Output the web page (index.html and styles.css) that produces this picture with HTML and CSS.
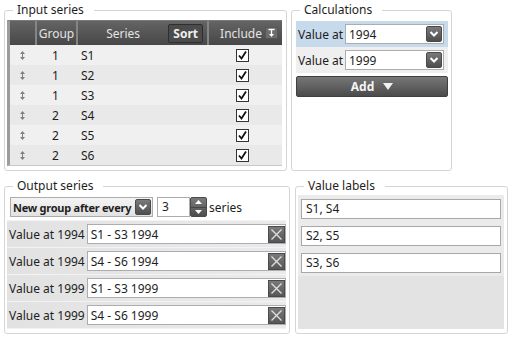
FILE: index.html
```html
<!DOCTYPE html>
<html lang="en">
<head>
<meta charset="UTF-8">
<title>Series grouping</title>
<link rel="stylesheet" href="styles.css">
</head>
<body>

<div class="top">
  <fieldset class="box input-box">
    <legend>Input series</legend>
    <div class="grid">
      <div class="grid-head">
        <div class="cell"></div>
        <div class="cell center">Group</div>
        <div class="cell series-head"><span>Series</span><span class="sort-btn">Sort</span></div>
        <div class="cell include-head">
          <span>Include</span>
          <span class="mini-btn"><svg width="11" height="10" viewBox="0 0 11 10"><path d="M2.5 1.5h6M5.5 1.5v6" stroke="#fff" stroke-width="1.3" fill="none"/><path d="M3 6h5l-2.5 3z" fill="#fff"/></svg></span>
        </div>
      </div>
      <div class="grid-row"><div class="cell center"><i class="handle"></i></div><div class="cell center">1</div><div class="cell name">S1</div><div class="cell check-cell"><span class="check"></span></div></div>
      <div class="grid-row"><div class="cell center"><i class="handle"></i></div><div class="cell center">1</div><div class="cell name">S2</div><div class="cell check-cell"><span class="check"></span></div></div>
      <div class="grid-row"><div class="cell center"><i class="handle"></i></div><div class="cell center">1</div><div class="cell name">S3</div><div class="cell check-cell"><span class="check"></span></div></div>
      <div class="grid-row"><div class="cell center"><i class="handle"></i></div><div class="cell center">2</div><div class="cell name">S4</div><div class="cell check-cell"><span class="check"></span></div></div>
      <div class="grid-row"><div class="cell center"><i class="handle"></i></div><div class="cell center">2</div><div class="cell name">S5</div><div class="cell check-cell"><span class="check"></span></div></div>
      <div class="grid-row"><div class="cell center"><i class="handle"></i></div><div class="cell center">2</div><div class="cell name">S6</div><div class="cell check-cell"><span class="check"></span></div></div>
    </div>
  </fieldset>

  <fieldset class="box calc-box">
    <legend>Calculations</legend>
    <div class="calc">
      <div class="calc-row active">
        <span>Value at</span>
        <div class="combo"><span>1994</span><span class="drop"></span></div>
      </div>
      <div class="calc-row">
        <span>Value at</span>
        <div class="combo"><span>1999</span><span class="drop"></span></div>
      </div>
      <div class="add-btn">Add <svg width="10" height="7" viewBox="0 0 10 7"><path d="M0 0h10L5 7z" fill="#f2f2f2"/></svg></div>
    </div>
  </fieldset>
</div>

<div class="bottom">
  <fieldset class="box output-box">
    <legend>Output series</legend>
    <div class="group-row">
      <div class="combo combo-bold"><span>New group after every</span><span class="drop"></span></div>
      <div class="number">3</div>
      <span class="spin"><i class="up"></i><i class="down"></i></span>
      <span class="unit">series</span>
    </div>
    <div class="out-list">
      <div class="out-row"><span>Value at 1994</span><div class="text-box">S1 - S3 1994<span class="clear"></span></div></div>
      <div class="out-row"><span>Value at 1994</span><div class="text-box">S4 - S6 1994<span class="clear"></span></div></div>
      <div class="out-row"><span>Value at 1999</span><div class="text-box">S1 - S3 1999<span class="clear"></span></div></div>
      <div class="out-row"><span>Value at 1999</span><div class="text-box">S4 - S6 1999<span class="clear"></span></div></div>
    </div>
  </fieldset>

  <fieldset class="box labels-box">
    <legend>Value labels</legend>
    <div class="labels">
      <div class="label-rows">
        <div class="label-row"><div class="text-box">S1, S4</div></div>
        <div class="label-row"><div class="text-box">S2, S5</div></div>
        <div class="label-row"><div class="text-box">S3, S6</div></div>
      </div>
    </div>
  </fieldset>
</div>

</body>
</html>
```

FILE: styles.css
```css
body {
  margin: 0;
  font-family: "Noto Sans", sans-serif;
  font-size: 12px;
  color: #1e1e1e;
  background: #fff;
}

.top, .bottom {
  display: flex;
  padding-left: 4px;
}
.top { padding-top: 3px; gap: 4px; }
.bottom { margin-top: 8px; gap: 5px; }

/* group boxes */
fieldset.box {
  margin: 0;
  padding: 0;
  min-width: 0;
  border: 1px solid #d5d5d5;
  border-radius: 3px;
  box-sizing: border-box;
}
legend {
  margin-left: 8px;
  padding: 0 10px 0 4px;
  line-height: 14px;
}
.input-box { width: 283px; }
.calc-box { width: 161px; }
.output-box { width: 286px; }
.labels-box { width: 213px; }

/* input grid */
.grid {
  margin: 3px 4px 4px 2px;
  border-left: 3px solid #9c9c9c;
  border-top: 1px solid #7a7a7a;
  border-bottom: 1px solid #c8c8c8;
}
.grid-head, .grid-row {
  display: grid;
  grid-template-columns: 25px 41px 131px 1fr;
}
.grid-head {
  height: 24px;
  background: linear-gradient(#646464, #474747);
  color: #e4e4e4;
}
.grid-head .cell + .cell { border-left: 2px solid #858585; }
.cell {
  display: flex;
  align-items: center;
  min-width: 0;
}
.center { justify-content: center; }
.series-head span:first-child { flex: 1; text-align: center; }
.sort-btn {
  height: 17px;
  margin-right: 4px;
  padding: 0 4px;
  line-height: 17px;
  font-weight: bold;
  color: #eee;
  background: #4b4b4b;
  border: 1px solid #2f2f2f;
  border-radius: 2px;
}
.include-head { justify-content: flex-end; gap: 3px; padding-right: 4px; }
.mini-btn {
  display: flex;
  align-items: center;
  justify-content: center;
  width: 13px;
  height: 12px;
  background: #6d6d6d;
  border: 1px solid #555;
  box-sizing: border-box;
}

.grid-row { height: 20px; background: #f0f0f0; }
.grid-row:nth-child(odd) { background: #e9e9e9; }
.name { padding-left: 5px; }
.check-cell { justify-content: center; padding-right: 5px; }
.check {
  width: 13px;
  height: 13px;
  box-sizing: border-box;
  border: 1px solid #333;
  background: #fff url("data:image/svg+xml,%3Csvg xmlns='http://www.w3.org/2000/svg' width='11' height='11'%3E%3Cpath d='M2 5.5l2.5 3L9 1.5' stroke='%23111' stroke-width='1.8' fill='none'/%3E%3C/svg%3E") center no-repeat;
}
.handle {
  width: 5px;
  height: 9px;
  background: url("data:image/svg+xml,%3Csvg xmlns='http://www.w3.org/2000/svg' width='5' height='9'%3E%3Cpath d='M0 3h5L2.5 0zM0 6h5L2.5 9z' fill='%23808080'/%3E%3Crect x='2' y='3' width='1' height='3' fill='%23808080'/%3E%3C/svg%3E") no-repeat;
}

/* calculations */
.calc { margin: 4px 3px 0 4px; }
.calc-row {
  display: flex;
  align-items: center;
  justify-content: space-between;
  height: 26px;
  padding: 0 4px 0 2px;
  background: #efefef;
}
.calc-row.active { background: #c7daec; }

.combo {
  display: flex;
  align-items: center;
  width: 99px;
  height: 20px;
  box-sizing: border-box;
  padding-left: 3px;
  border: 1px solid #abadb3;
  background: #fff;
}
.combo span:first-child { flex: 1; white-space: nowrap; overflow: hidden; }
.drop {
  flex: none;
  width: 16px;
  height: 16px;
  margin-right: 1px;
  box-sizing: border-box;
  border: 1px solid #4a4a4a;
  border-radius: 2px;
  background: url("data:image/svg+xml,%3Csvg xmlns='http://www.w3.org/2000/svg' width='14' height='14'%3E%3Cpath d='M3.5 5l3.5 3.5L10.5 5' stroke='%23fff' stroke-width='2' fill='none'/%3E%3C/svg%3E") center no-repeat, linear-gradient(#7a7a7a, #4e4e4e);
}

.add-btn {
  display: flex;
  align-items: center;
  justify-content: center;
  gap: 9px;
  height: 21px;
  margin-top: 3px;
  box-sizing: border-box;
  border: 1px solid #3f3f3f;
  border-radius: 2px;
  background: linear-gradient(#777, #4b4b4b);
  color: #f4f4f4;
  font-weight: bold;
}

/* output series */
.group-row {
  display: flex;
  align-items: center;
  height: 20px;
  margin: 4px 0 0 5px;
}
.combo-bold {
  width: 143px;
  padding-left: 2px;
  font-weight: bold;
  font-size: 11px;
  letter-spacing: -0.25px;
  border-color: #acacac;
  background: linear-gradient(#f4f4f4, #e2e2e2);
}
.number {
  width: 33px;
  height: 20px;
  margin-left: 4px;
  box-sizing: border-box;
  padding-left: 4px;
  line-height: 18px;
  border: 1px solid #abadb3;
  background: #fff;
}
.spin {
  display: flex;
  flex-direction: column;
  width: 17px;
  height: 20px;
  box-sizing: border-box;
  border: 1px solid #4a4a4a;
  border-radius: 2px;
  background: linear-gradient(#7a7a7a, #4e4e4e);
}
.spin i {
  flex: 1;
  background: url("data:image/svg+xml,%3Csvg xmlns='http://www.w3.org/2000/svg' width='7' height='4'%3E%3Cpath d='M0 4h7L3.5 0z' fill='%23fff'/%3E%3C/svg%3E") center no-repeat;
}
.spin i.down {
  border-top: 1px solid #444;
  background-image: url("data:image/svg+xml,%3Csvg xmlns='http://www.w3.org/2000/svg' width='7' height='4'%3E%3Cpath d='M0 0h7L3.5 4z' fill='%23fff'/%3E%3C/svg%3E");
}
.unit { margin-left: 2px; }

.out-list {
  height: 109px;
  margin: 3px 3px 4px 2px;
  background: #f2f2f2;
}
.out-row {
  display: flex;
  align-items: center;
  gap: 2px;
  height: 27px;
  box-sizing: border-box;
  padding-left: 2px;
  border-top: 1px solid #f3f3f3;
  background: linear-gradient(to right, #e2e2e2, #eaeaea);
}
.out-row span { white-space: nowrap; }

.text-box {
  display: flex;
  align-items: center;
  justify-content: space-between;
  width: 200px;
  height: 20px;
  box-sizing: border-box;
  padding-left: 3px;
  border: 1px solid #abadb3;
  background: #fff;
}
.clear {
  width: 17px;
  height: 17px;
  box-sizing: border-box;
  border: 1px solid #4a4a4a;
  background: url("data:image/svg+xml,%3Csvg xmlns='http://www.w3.org/2000/svg' width='15' height='15'%3E%3Cpath d='M2.5 2.5l10 10M12.5 2.5l-10 10' stroke='%23ddd' stroke-width='1.4' fill='none'/%3E%3C/svg%3E") center no-repeat, linear-gradient(#7a7a7a, #575757);
}

/* value labels */
.labels {
  height: 134px;
  margin: 2px 3px 4px 2px;
  background: #e3e3e3;
}
.label-rows { background: #ebebeb; }
.label-row {
  display: flex;
  align-items: center;
  height: 27px;
  padding: 0 3px;
}
.label-row .text-box { width: 100%; padding-left: 4px; border-color: #a8a8a8; }
```
